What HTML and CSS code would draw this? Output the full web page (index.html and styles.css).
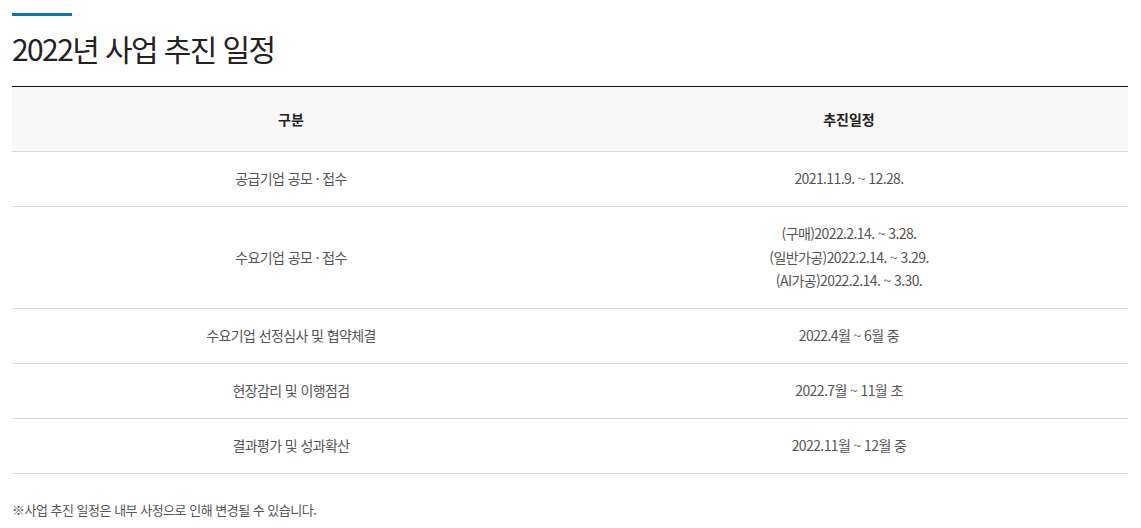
FILE: index.html
```html
<!DOCTYPE html>
<html lang="ko">
<head>
<meta charset="utf-8">
<title>2022년 사업 추진 일정</title>
<link rel="stylesheet" href="styles.css">
</head>
<body>
<div class="wrap">
  <div class="title-bar"></div>
  <h2 class="title">2022년 사업 추진 일정</h2>
  <table class="schedule">
    <thead>
      <tr><th>구분</th><th>추진일정</th></tr>
    </thead>
    <tbody>
      <tr><td>공급기업 공모 · 접수</td><td>2021.11.9. ~ 12.28.</td></tr>
      <tr><td>수요기업 공모 · 접수</td><td>(구매)2022.2.14. ~ 3.28.<br>(일반가공)2022.2.14. ~ 3.29.<br>(AI가공)2022.2.14. ~ 3.30.</td></tr>
      <tr><td>수요기업 선정심사 및 협약체결</td><td>2022.4월 ~ 6월 중</td></tr>
      <tr><td>현장감리 및 이행점검</td><td>2022.7월 ~ 11월 초</td></tr>
      <tr><td>결과평가 및 성과확산</td><td>2022.11월 ~ 12월 중</td></tr>
    </tbody>
  </table>
  <p class="note">※사업 추진 일정은 내부 사정으로 인해 변경될 수 있습니다.</p>
</div>
</body>
</html>
```
FILE: styles.css
```css
* { box-sizing: border-box; }
body {
  margin: 0;
  background: #fff;
  font-family: "Noto Sans CJK KR", "Noto Sans", sans-serif;
  color: #555;
}
.wrap {
  padding: 13px 13px 0 12px;
}
.title-bar {
  width: 60px;
  height: 3px;
  background: #0a74b5;
}
.title {
  margin: 10px 0 0;
  font-size: 30px;
  font-weight: 400;
  line-height: 44px;
  color: #222;
  letter-spacing: -1.6px;
}
.schedule {
  width: 100%;
  margin-top: 16px;
  border-collapse: collapse;
  border-top: 1px solid #111;
  table-layout: fixed;
}
.schedule th {
  background: #f8f8f8;
  font-size: 14px;
  font-weight: 700;
  color: #222;
  line-height: 24px;
  padding: 20px 10px;
  border-bottom: 1px solid #d9d9d9;
}
.schedule td {
  text-align: center;
  font-size: 14px;
  color: #555;
  line-height: 23.8px;
  padding: 15px 10px;
  border-bottom: 1px solid #d9d9d9;
  letter-spacing: -0.6px;
}
.note {
  margin: 24px 0 0;
  font-size: 13px;
  line-height: 24px;
  color: #555;
  letter-spacing: -0.5px;
}
```
